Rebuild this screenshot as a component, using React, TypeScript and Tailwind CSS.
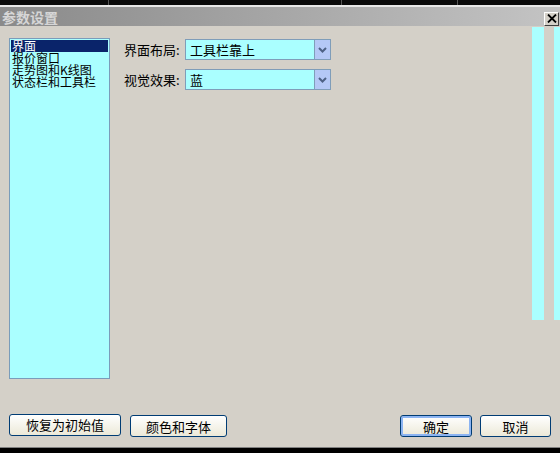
import React from 'react';

const items = ['界面', '报价窗口', '走势图和K线图', '状态栏和工具栏'];

const Combo = ({ value }: { value: string }) => (
  <div className="flex h-[21px] w-[146px] border border-[#7f9db9] bg-[#aaffff]">
    <div className="flex-1 pl-[4px] text-[13px] leading-[19px] text-black">{value}</div>
    <div className="flex w-[16px] items-center justify-center border-l border-[#7f9db9] bg-[#b4c8f6]">
      <svg width="9" height="6" viewBox="0 0 9 6">
        <path d="M1 1 L4.5 4.5 L8 1" fill="none" stroke="#4d6185" strokeWidth="2" />
      </svg>
    </div>
  </div>
);

const XpButton = ({ label, width, focused }: { label: string; width: string; focused?: boolean }) => (
  <button
    className={`${width} h-[22px] rounded-[3px] border border-[#003c74] bg-gradient-to-b from-white to-[#ece9d8] text-[13px] leading-none text-black ${
      focused ? 'shadow-[inset_0_0_0_2px_#8cb4f2]' : ''
    }`}
  >
    {label}
  </button>
);

export default function App() {
  return (
    <div
      className="flex h-[453px] w-[560px] flex-col overflow-hidden bg-black"
      style={{ fontFamily: '"Noto Sans CJK SC", "Noto Sans", sans-serif' }}
    >
      <div className="relative h-[5px] bg-[#0a0a0a]">
        <div className="absolute left-[108px] top-0 h-[5px] w-px bg-[#555]" />
        <div className="absolute left-[341px] top-0 h-[5px] w-px bg-[#555]" />
        <div className="absolute left-[457px] top-0 h-[5px] w-px bg-[#555]" />
      </div>
      <div className="h-[2px] bg-[#e8e8e8]" />
      {/* title bar */}
      <div className="flex h-[19px] items-center justify-between bg-gradient-to-r from-[#8a8a8a] to-[#c4c4c4] pl-[2px] pr-[1px]">
        <span className="text-[14px] font-bold leading-none text-[#d6d6d6]">参数设置</span>
        <div className="mt-[4px] flex h-[14px] w-[15px] items-center justify-center border border-b-[#404040] border-l-white border-r-[#404040] border-t-white bg-[#d4d0c8]">
          <svg width="10" height="9" viewBox="0 0 10 9">
            <path d="M1 0.5 L9 8.5 M9 0.5 L1 8.5" stroke="#000" strokeWidth="1.8" />
          </svg>
        </div>
      </div>
      {/* body */}
      <div className="flex h-[421px] flex-col bg-[#d4d0c8]">
        <div className="flex flex-1">
          <div className="ml-[9px] mt-[12px] h-[341px] w-[101px] border border-[#7a9cba] bg-[#aaffff] pt-[1px]">
            {items.map((it, i) => (
              <div
                key={it}
                className={`mx-[1px] h-[12px] whitespace-nowrap pl-[1px] text-[12px] leading-[12px] ${
                  i === 0 ? 'bg-[#0a246a] text-white' : 'text-black'
                }`}
              >
                {it}
              </div>
            ))}
          </div>
          <div className="ml-[14px] mt-[13px] flex flex-col gap-[9px]">
            <div className="flex items-center">
              <span className="w-[61px] whitespace-nowrap text-[13px] text-black">界面布局:</span>
              <Combo value="工具栏靠上" />
            </div>
            <div className="flex items-center">
              <span className="w-[61px] whitespace-nowrap text-[13px] text-black">视觉效果:</span>
              <Combo value="蓝" />
            </div>
          </div>
          <div className="ml-auto flex h-[294px] gap-[10px] pt-[1px]">
            <div className="w-[12px] bg-[#aaffff]" />
            <div className="w-[6px] bg-[#aaffff]" />
          </div>
        </div>
        <div className="flex items-center px-[9px] pb-[10px]">
          <XpButton label="恢复为初始值" width="w-[112px]" />
          <div className="ml-[9px]">
            <XpButton label="颜色和字体" width="w-[97px]" />
          </div>
          <div className="ml-auto">
            <XpButton label="确定" width="w-[72px]" focused />
          </div>
          <div className="ml-[8px]">
            <XpButton label="取消" width="w-[71px]" />
          </div>
        </div>
      </div>
      <div className="h-px bg-[#808080]" />
    </div>
  );
}
